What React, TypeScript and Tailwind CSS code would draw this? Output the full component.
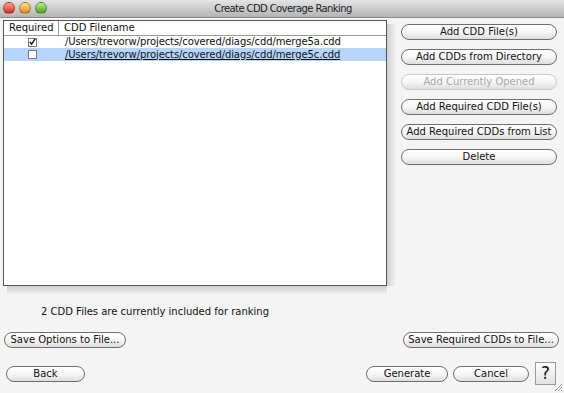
import React from "react";

const font = { fontFamily: '"DejaVu Sans", "Liberation Sans", sans-serif' };

function AquaButton({
  label,
  className = "",
  disabled = false,
}: {
  label: string;
  className?: string;
  disabled?: boolean;
}) {
  return (
    <button
      type="button"
      className={`flex h-[16px] items-center justify-center rounded-full border bg-gradient-to-b from-white via-[#f6f6f6] to-[#dedede] text-[10px] leading-none ${
        disabled
          ? "border-[#c8c8c8] text-[#a8a8a8]"
          : "border-[#6e6e6e] text-[#111]"
      } ${className}`}
    >
      {label}
    </button>
  );
}

function Light({ from, to }: { from: string; to: string }) {
  return (
    <span
      className={`block h-[12px] w-[12px] rounded-full border border-black/30 bg-gradient-to-b ${from} ${to}`}
    />
  );
}

function Check({ checked }: { checked: boolean }) {
  return (
    <span className="flex h-[9px] w-[9px] items-center justify-center border border-[#7a7a7a] bg-white">
      {checked && (
        <svg width="8" height="8" viewBox="0 0 8 8">
          <path d="M1 4 L3 6.5 L7 0.5" fill="none" stroke="#111" strokeWidth="1.6" />
        </svg>
      )}
    </span>
  );
}

export default function App() {
  const files = [
    { path: "/Users/trevorw/projects/covered/diags/cdd/merge5a.cdd", req: true },
    { path: "/Users/trevorw/projects/covered/diags/cdd/merge5c.cdd", req: false },
  ];
  return (
    <div style={font} className="relative flex h-[393px] w-[564px] flex-col overflow-hidden bg-[#f4f4f4] text-[#111]">
      {/* Title bar */}
      <div className="relative flex h-[18px] items-center justify-center border-b border-[#8a8a8a] bg-gradient-to-b from-[#e4e4e4] to-[#b4b4b4]">
        <div className="absolute left-[3px] top-[2px] flex gap-[4px]">
          <Light from="from-[#ff9a8a]" to="to-[#d2261b]" />
          <Light from="from-[#ffe08a]" to="to-[#d98a10]" />
          <Light from="from-[#b9f08a]" to="to-[#4aa21e]" />
        </div>
        <span className="ml-[2px] text-[10px] tracking-[-0.6px] text-[#222]">Create CDD Coverage Ranking</span>
      </div>

      {/* Main area */}
      <div className="flex items-start">
        <div className="ml-[3px] mt-[2px] flex flex-col">
          <div className="flex">
            <div className="h-[266px] w-[384px] border border-[#555] bg-white">
              <div className="flex h-[15px] border-b border-[#9a9a9a] text-[10px] leading-[14px]">
                <div className="w-[55px] border-r border-[#9a9a9a] pl-[5px]">Required</div>
                <div className="pl-[5px]">CDD Filename</div>
              </div>
              {files.map((f, i) => (
                <div
                  key={f.path}
                  className={`flex h-[12px] items-center text-[10px] leading-none ${
                    i === 1 ? "h-[13px] bg-[#b5d5ff] underline" : ""
                  }`}
                >
                  <div className="flex w-[56px] justify-center">
                    <Check checked={f.req} />
                  </div>
                  <div className="pl-[5px] tracking-[-0.1px]">{f.path}</div>
                </div>
              ))}
            </div>
            <div className="mt-[4px] w-[9px] bg-gradient-to-r from-[#cfcfcf] to-transparent" />
          </div>
          <div className="ml-[4px] h-[9px] w-[380px] bg-gradient-to-b from-[#cfcfcf] to-transparent" />
        </div>

        <div className="ml-[5px] mt-[6px] flex w-[156px] flex-col gap-[9px]">
          <AquaButton label="Add CDD File(s)" />
          <AquaButton label="Add CDDs from Directory" />
          <AquaButton label="Add Currently Opened" disabled />
          <AquaButton label="Add Required CDD File(s)" />
          <AquaButton label="Add Required CDDs from List" />
          <AquaButton label="Delete" />
        </div>
      </div>

      <div className="ml-[41px] mt-[10px] text-[10px] leading-[14px]">
        2 CDD Files are currently included for ranking
      </div>

      <div className="mt-[13px] flex justify-between pl-[4px] pr-[5px]">
        <AquaButton label="Save Options to File..." className="w-[122px]" />
        <AquaButton label="Save Required CDDs to File..." className="w-[156px]" />
      </div>

      <div className="relative mt-[14px] flex items-center pl-[6px] pr-[8px]">
        <AquaButton label="Back" className="w-[79px]" />
        <div className="flex-1" />
        <AquaButton label="Generate" className="w-[82px]" />
        <AquaButton label="Cancel" className="ml-[5px] w-[76px]" />
        <div className="ml-[6px] flex h-[23px] w-[21px] items-center justify-center border border-[#9a9a9a] bg-gradient-to-b from-white to-[#e2e2e2] text-[17px] leading-none">
          ?
        </div>
      </div>
      <svg className="absolute left-[553px] top-[382px]" width="10" height="10" viewBox="0 0 10 10">
        <path d="M9 2 L2 9 M9 5 L5 9 M9 8 L8 9" stroke="#999" strokeWidth="1" />
      </svg>
    </div>
  );
}
